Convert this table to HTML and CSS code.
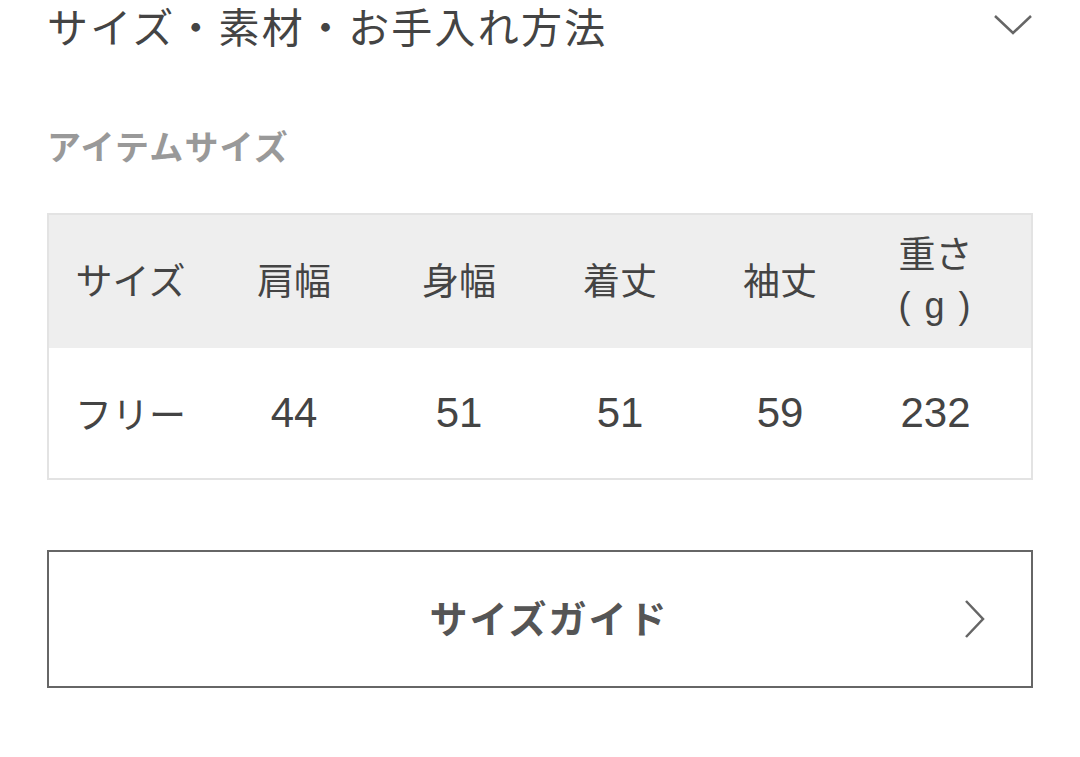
FILE: index.html
```html
<!DOCTYPE html>
<html lang="ja">
<head>
<meta charset="utf-8">
<link rel="stylesheet" href="styles.css">
</head>
<body>
<div class="page">
  <div class="acc-head">
    <h2 class="acc-title">サイズ・素材・お手入れ方法</h2>
    <svg class="chev-down" width="40" height="24" viewBox="0 0 40 24"><polyline points="2,3 20,20 38,3" fill="none" stroke="#666" stroke-width="2.5"/></svg>
  </div>
  <h3 class="sub">アイテムサイズ</h3>
  <table class="size-table">
    <thead>
      <tr><th>サイズ</th><th>肩幅</th><th>身幅</th><th>着丈</th><th>袖丈</th><th>重さ<br><span class="unit">( g )</span></th></tr>
    </thead>
    <tbody>
      <tr><td class="label">フリー</td><td>44</td><td>51</td><td>51</td><td>59</td><td>232</td></tr>
    </tbody>
  </table>
  <a class="guide-btn">
    <span class="guide-label">サイズガイド</span>
    <svg class="chev-right" width="24" height="40" viewBox="0 0 24 40"><polyline points="3,2 20,20 3,38" fill="none" stroke="#666" stroke-width="2.5"/></svg>
  </a>
</div>
</body>
</html>
```
FILE: styles.css
```css
* { box-sizing: border-box; }
html, body { margin: 0; padding: 0; background: #fff; }
body { font-family: "Noto Sans CJK JP", "Noto Sans", sans-serif; color: #333; }
.page { padding: 0 47px; }
.acc-head { display: flex; justify-content: space-between; align-items: center; height: 54px; }
.acc-title { margin: 0; font-size: 41px; font-weight: 400; color: #444; line-height: 54px; letter-spacing: 2.2px; margin-top: -4px; }
.chev-down { margin-top: -4px; }
.sub { margin: 70px 0 0; font-size: 34px; font-weight: 700; color: #999; line-height: 44px; letter-spacing: 1.2px; }
.size-table { margin-top: 45px; width: 100%; border-collapse: collapse; table-layout: fixed; border: 2px solid #e3e3e3; }
.size-table th, .size-table td { text-align: center; font-weight: 400; color: #444; padding: 0; }
.size-table th { background: #eeeeee; height: 134px; line-height: 50px; font-size: 37px; padding-bottom: 6px; }
.size-table th:nth-child(1) { width: 164px; }
.size-table th:nth-child(2) { width: 164px; }
.size-table th:nth-child(3) { width: 166px; }
.size-table th:nth-child(4) { width: 156px; }
.size-table th:nth-child(5) { width: 164px; }
.size-table th:nth-child(6), .size-table td:nth-child(6) { padding-right: 22px; }
.unit { font-family: "Liberation Sans", sans-serif; font-size: 36px; letter-spacing: 2px; }
.size-table td { height: 131px; font-family: "Liberation Sans", "Noto Sans CJK JP", sans-serif; font-size: 42px; }
.size-table td.label { font-family: "Noto Sans CJK JP", sans-serif; font-size: 37px; }
.guide-btn { margin-top: 70px; display: flex; align-items: center; justify-content: center; position: relative; height: 138px; border: 2px solid #666; }
.guide-label { font-size: 38px; font-weight: 700; color: #555; letter-spacing: 2px; margin-top: -6px; margin-left: 18px; }
.chev-right { position: absolute; right: 44px; top: 50%; margin-top: -20px; }
```
